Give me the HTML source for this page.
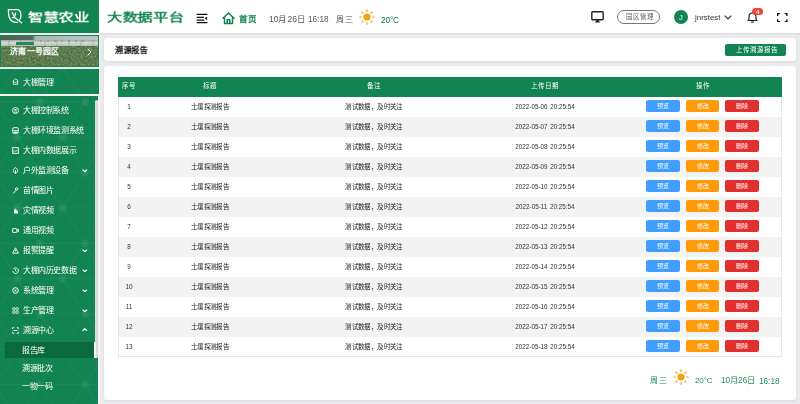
<!DOCTYPE html>
<html lang="zh-CN"><head><meta charset="utf-8">
<style>
*{margin:0;padding:0;box-sizing:border-box}
html,body{width:800px;height:404px;overflow:hidden;background:#ebebee;font-family:"Liberation Sans",sans-serif}
.abs{position:absolute}
.t{position:absolute;white-space:nowrap;line-height:1;will-change:transform}
.card{position:absolute;background:#fff;border-radius:3px;box-shadow:0 1px 3px rgba(0,0,0,.07)}
.btn{position:absolute;width:33.3px;height:12.3px;border-radius:2px}
</style></head><body>
<div class="abs" style="left:0;top:0;width:800px;height:32.5px;background:#fff"></div>
<div class="abs" style="left:99px;top:32.5px;width:701px;height:3px;background:linear-gradient(180deg,#d9d9dc,#e6e6e9 50%,#ebebee)"></div>
<div class="abs" style="left:0;top:0;width:99px;height:32.75px;background:#128451"></div>
<div class="abs" style="left:0;top:32.75px;width:99px;height:2.25px;background:#f1ecee"></div>
<svg class="abs" style="left:4px;top:6px" width="22" height="20" viewBox="0 0 22 20"><g fill="none" stroke="#fff" stroke-width="1.25" stroke-linecap="round" stroke-linejoin="round"><path d="M4.4 3.6 H13.8 Q16.9 4.3 16.9 9.5 Q16.9 12.3 15.6 13.8"/><path d="M13.4 16.3 Q7.2 16.6 5.2 11.2 Q4.4 8.5 4.4 3.6"/><path d="M8.3 6.6 L10.3 10.8 M11.7 7 L10.5 10.8 M8.2 11.6 H11 M11.2 11.9 L17.6 16.8"/></g></svg>
<div class="t" style="left:28px;top:11.7px;font-size:15.5px;color:#fff;font-weight:700;letter-spacing:-0.4px;transform:scale(0.98,0.72);transform-origin:0 0">智慧农业</div>
<div class="t" style="left:107px;top:12.2px;font-size:15.5px;color:#128451;font-weight:700;letter-spacing:-0.3px;transform:scale(0.98,0.72);transform-origin:0 0">大数据平台</div>
<svg class="abs" style="left:196px;top:13px" width="12" height="11" viewBox="0 0 12 11"><path d="M1.1 1.36H11M1.1 4.3H7.6M1.1 7.2H7.6M1.1 9.6H11" stroke="#111" stroke-width="1.2" stroke-linecap="round"/><path d="M9 5.3 L10.8 4 V6.8 Z" fill="#111" stroke="#111" stroke-width=".5" stroke-linejoin="round"/></svg>
<svg class="abs" style="left:222px;top:12px" width="13" height="12.5" viewBox="0 0 13 12.5"><path d="M1 6.2 L6.5 1 L12 6.2 M2.5 4.9 V11.5 H10.5 V4.9 M5.2 11.5 V7.8 H7.8 V11.5" stroke="#128451" stroke-width="1.5" fill="none" stroke-linejoin="round" stroke-linecap="round"/></svg>
<div class="t" style="left:238.5px;top:15.3px;font-size:8.5px;color:#128451;font-weight:700;letter-spacing:0px;">首页</div>
<div class="t" style="left:268.5px;top:15.2px;font-size:8.5px;color:#555;font-weight:400;letter-spacing:0px;">10月26日</div>
<div class="t" style="left:307.8px;top:15.9px;font-size:8.2px;color:#555;font-weight:400;letter-spacing:0px;">16:18</div>
<div class="t" style="left:336px;top:16px;font-size:8px;color:#555;font-weight:400;letter-spacing:0.5px;">周三</div>
<svg class="abs" style="left:358.5px;top:8.7px" width="16" height="16" viewBox="0 0 16 16"><circle cx="8" cy="8" r="3.6" fill="#eea512"/><g stroke="#eea512" stroke-width="1.2" stroke-linecap="round"><path d="M8 .8v1.6M8 13.6v1.6M.8 8h1.6M13.6 8h1.6M2.9 2.9l1.1 1.1M12 12l1.1 1.1M2.9 13.1l1.1-1.1M12 4l1.1-1.1"/></g></svg>
<div class="t" style="left:380.6px;top:15.8px;font-size:8.4px;color:#0f7a49;font-weight:400;letter-spacing:-0.2px;">20°C</div>
<svg class="abs" style="left:591px;top:11px" width="13" height="12" viewBox="0 0 13 12"><rect x="0.8" y="0.8" width="11.4" height="8" rx="1" fill="none" stroke="#222" stroke-width="1.4"/><path d="M4 11.5h5L7.5 9h-2z" fill="#222"/></svg>
<div class="abs" style="left:617.3px;top:10px;width:43px;height:14px;border:1px solid #777;border-radius:7px"></div>
<div class="t" style="left:625.5px;top:13.6px;font-size:6.5px;color:#666;font-weight:400;letter-spacing:0px;">园区管理</div>
<div class="abs" style="left:673.6px;top:9.8px;width:14.6px;height:14.6px;border-radius:50%;background:#128451"></div>
<div class="t" style="left:679.2px;top:13.6px;font-size:7.5px;color:#fff;font-weight:400;letter-spacing:0px;">J</div>
<div class="t" style="left:694.5px;top:13.5px;font-size:7.9px;color:#333;font-weight:400;letter-spacing:0px;">jnrstest</div>
<svg class="abs" style="left:724px;top:14.5px" width="8" height="5" viewBox="0 0 8 5"><path d="M.7 .7 L4 4 L7.3 .7" stroke="#333" stroke-width="1.2" fill="none"/></svg>
<svg class="abs" style="left:746.5px;top:12px" width="11" height="11" viewBox="0 0 11 11"><path d="M1 8.5 H10 L9 7 V4.5 A3.5 3.5 0 0 0 2 4.5 V7 Z" fill="none" stroke="#222" stroke-width="1.2" stroke-linejoin="round"/><path d="M4 10 H7" stroke="#222" stroke-width="1.1"/></svg>
<div class="abs" style="left:752px;top:8px;width:11px;height:7px;border-radius:3.5px;background:#f0443a"></div>
<div class="t" style="left:755.8px;top:8.8px;font-size:6px;color:#fff;font-weight:700;letter-spacing:0px;">4</div>
<svg class="abs" style="left:777px;top:12.8px" width="10.6" height="9.2" viewBox="0 0 10.6 9.2"><path d="M.65 2.9V.65H2.9M7.7 .65h2.25V2.9M9.95 6.3v2.25H7.7M2.9 8.55H.65V6.3" stroke="#111" stroke-width="1.3" fill="none"/></svg>
<div class="abs" style="left:98.3px;top:32.75px;width:1.7px;height:372px;background:#f4f4f4"></div>
<div class="abs" style="left:0;top:35px;width:99px;height:32px;background:#128451"></div>
<div class="abs" style="left:1px;top:36px;width:97px;height:30px;overflow:hidden;background:#5e7a50">
  <div class="abs" style="left:0;top:0;width:97px;height:5px;background:linear-gradient(90deg,#4c604c 0,#56695a 32%,#aab9b6 36%,#b9c6c4 100%)"></div>
  <div class="abs" style="left:0;top:4px;width:97px;height:6.5px;background:linear-gradient(180deg,#9aa99f,#cfd9d2 35%,#c3cec6 70%,#94a595)"></div>
  <svg class="abs" style="left:0;top:4px" width="97" height="8"><g stroke="#7d8c82" stroke-width=".5"><path d="M8 0V7M20 0V7M32 0V7M44 0V7M56 0V7M68 0V7M80 0V7M92 0V7"/></g><g fill="#3d4a40"><circle cx="40" cy="1" r=".6"/><circle cx="47" cy="1" r=".6"/><circle cx="54" cy="1" r=".6"/><circle cx="61" cy="1" r=".6"/><circle cx="68" cy="1" r=".6"/><circle cx="75" cy="1" r=".6"/><circle cx="82" cy="1" r=".6"/></g></svg>
  <div class="abs" style="left:15px;top:5.8px;width:17.5px;height:3.2px;background:#27865a"></div>
  <svg class="abs" style="left:0;top:10.3px" width="97" height="20"><filter id="nz" x="0" y="0" width="100%" height="100%" color-interpolation-filters="sRGB"><feTurbulence type="fractalNoise" baseFrequency="0.5" numOctaves="2" seed="5"/><feColorMatrix values="0.32 0 0 0 0.21  0.36 0 0 0 0.31  0.26 0 0 0 0.18  0 0 0 0 1"/></filter><rect width="97" height="20" filter="url(#nz)"/></svg>
</div>
<div class="t" style="left:10.3px;top:48.4px;font-size:8px;color:#fff;font-weight:700;letter-spacing:0.3px;">济南一号园区</div>
<svg class="abs" style="left:86.5px;top:47.8px" width="5" height="8" viewBox="0 0 5 8"><path d="M.8 .7 L4 4 L.8 7.3" stroke="#fff" stroke-width="1" fill="none"/></svg>
<div class="abs" style="left:0;top:67px;width:99px;height:2px;background:#f1ecee"></div>
<div class="abs" style="left:0;top:69px;width:99px;height:25px;background:#128451"></div>
<div class="abs" style="left:0;top:94px;width:99px;height:2px;background:#f4f4f4"></div>
<svg class="abs" style="left:11.6px;top:78.3px" width="7" height="7" viewBox="0 0 7 7"><path d="M.7 3.2 L3.5 .7 L6.3 3.2 M1.4 2.7 V6.3 H5.6 V2.7 M2.3 4.2 H4.7" stroke="#fff" stroke-width=".8" fill="none"/></svg>
<div class="t" style="left:23.3px;top:79.2px;font-size:8px;color:#fff;font-weight:500;letter-spacing:-0.4px;">大棚管理</div>
<div class="abs" style="left:0;top:96px;width:98.3px;height:310px;background:#128451"></div>
<svg class="abs" style="left:0;top:0" width="98.3" height="404" viewBox="0 0 98.3 404"><defs><clipPath id="sc"><rect x="0" y="69" width="98.3" height="25"/><rect x="0" y="96" width="98.3" height="308"/></clipPath></defs><g clip-path="url(#sc)"><path d="M0 31.20H98.3 M0 66.55H98.3 M0 101.90H98.3 M0 137.25H98.3 M0 172.60H98.3 M0 207.95H98.3 M0 243.30H98.3 M0 278.65H98.3 M0 314.00H98.3 M0 349.35H98.3 M0 384.70H98.3 M0 420.05H98.3 M-520.94 69L-307.72 404 M-479.06 69L-692.28 404 M-475.94 69L-262.72 404 M-434.06 69L-647.28 404 M-430.94 69L-217.72 404 M-389.06 69L-602.28 404 M-385.94 69L-172.72 404 M-344.06 69L-557.28 404 M-340.94 69L-127.72 404 M-299.06 69L-512.28 404 M-295.94 69L-82.72 404 M-254.06 69L-467.28 404 M-250.94 69L-37.72 404 M-209.06 69L-422.28 404 M-205.94 69L7.28 404 M-164.06 69L-377.28 404 M-160.94 69L52.28 404 M-119.06 69L-332.28 404 M-115.94 69L97.28 404 M-74.06 69L-287.28 404 M-70.94 69L142.28 404 M-29.06 69L-242.28 404 M-25.94 69L187.28 404 M15.94 69L-197.28 404 M19.06 69L232.28 404 M60.94 69L-152.28 404 M64.06 69L277.28 404 M105.94 69L-107.28 404 M109.06 69L322.28 404 M150.94 69L-62.28 404 M154.06 69L367.28 404 M195.94 69L-17.28 404 M199.06 69L412.28 404 M240.94 69L27.72 404 M244.06 69L457.28 404 M285.94 69L72.72 404 M289.06 69L502.28 404 M330.94 69L117.72 404 M334.06 69L547.28 404 M375.94 69L162.72 404 M379.06 69L592.28 404 M420.94 69L207.72 404 M424.06 69L637.28 404 M465.94 69L252.72 404 M469.06 69L682.28 404 M510.94 69L297.72 404 M514.06 69L727.28 404 M555.94 69L342.72 404" fill="none" stroke="rgba(255,255,255,0.07)" stroke-width="0.8"/><g fill="rgba(255,255,255,0.05)"><circle cx="17.50" cy="66.55" r="4"/><circle cx="62.50" cy="66.55" r="4"/><circle cx="40.00" cy="101.90" r="4"/><circle cx="85.00" cy="101.90" r="4"/><circle cx="17.50" cy="137.25" r="4"/><circle cx="62.50" cy="137.25" r="4"/><circle cx="40.00" cy="172.60" r="4"/><circle cx="85.00" cy="172.60" r="4"/><circle cx="17.50" cy="207.95" r="4"/><circle cx="62.50" cy="207.95" r="4"/><circle cx="40.00" cy="243.30" r="4"/><circle cx="85.00" cy="243.30" r="4"/><circle cx="17.50" cy="278.65" r="4"/><circle cx="62.50" cy="278.65" r="4"/><circle cx="40.00" cy="314.00" r="4"/><circle cx="85.00" cy="314.00" r="4"/><circle cx="17.50" cy="349.35" r="4"/><circle cx="62.50" cy="349.35" r="4"/><circle cx="40.00" cy="384.70" r="4"/><circle cx="85.00" cy="384.70" r="4"/></g></g></svg>
<div class="abs" style="left:94.6px;top:100px;width:3.1px;height:257.5px;border-radius:1.5px;background:#dcdcdc"></div>
<svg class="abs" style="left:11.6px;top:106.90px" width="7" height="7" viewBox="0 0 7 7"><circle cx="3.5" cy="3.5" r="3" fill="none" stroke="#fff" stroke-width=".9"/><path d="M1.9 3.6 A1.6 1.6 0 0 1 5.1 3.6 Z" fill="#fff"/><path d="M1.9 5.1 H5.1" stroke="#fff" stroke-width=".8"/></svg>
<div class="t" style="left:23px;top:107.35px;font-size:8px;color:#fff;font-weight:500;letter-spacing:-0.4px;">大棚控制系统</div>
<svg class="abs" style="left:11.6px;top:126.90px" width="7" height="7" viewBox="0 0 7 7"><rect x=".6" y=".6" width="5.8" height="5.8" rx="1.6" fill="none" stroke="#fff" stroke-width=".9"/><path d="M1 3.4 H6" stroke="#fff" stroke-width=".8"/><path d="M1.6 4.6 H5.4 V6 H1.6Z" fill="#fff"/></svg>
<div class="t" style="left:23px;top:127.35px;font-size:8px;color:#fff;font-weight:500;letter-spacing:-0.4px;">大棚环境监测系统</div>
<svg class="abs" style="left:11.6px;top:146.90px" width="7" height="7" viewBox="0 0 7 7"><rect x=".7" y=".7" width="5.6" height="5.6" fill="none" stroke="#fff" stroke-width=".9"/><path d="M1.4 5 L2.6 3.6 L3.6 4.5 L5.6 3.2" stroke="#fff" stroke-width=".8" fill="none"/></svg>
<div class="t" style="left:23px;top:147.35px;font-size:8px;color:#fff;font-weight:500;letter-spacing:-0.4px;">大棚内数据展示</div>
<svg class="abs" style="left:11.6px;top:166.90px" width="7" height="7" viewBox="0 0 7 7"><path d="M3.5 .6 C6.2 2 6.4 5 3.5 6.4 C.6 5 .8 2 3.5 .6Z M3.5 3 V6.4" fill="none" stroke="#fff" stroke-width=".9"/></svg>
<div class="t" style="left:23px;top:167.35px;font-size:8px;color:#fff;font-weight:500;letter-spacing:-0.4px;">户外监测设备</div>
<svg class="abs" style="left:82.2px;top:169.00px" width="5.6" height="3.4" viewBox="0 0 5.6 3.4"><path d="M.6 .6 L2.8 2.7 L5 .6" stroke="#fff" stroke-width="1.2" fill="none"/></svg>
<svg class="abs" style="left:11.6px;top:186.90px" width="7" height="7" viewBox="0 0 7 7"><path d="M4.6 .7 C6.3 .7 6.3 3.1 4.6 3.3 C3 3.3 3 .7 4.6 .7Z M4 3.3 L1.3 6.4" fill="none" stroke="#fff" stroke-width="1"/></svg>
<div class="t" style="left:23px;top:187.35px;font-size:8px;color:#fff;font-weight:500;letter-spacing:-0.4px;">苗情图片</div>
<svg class="abs" style="left:11.6px;top:206.90px" width="7" height="7" viewBox="0 0 7 7"><path d="M1 6.4 H6 V3.6 L4.9 4.3 V2.6 L3.6 3.6 V.9 L2.1 2.8 V6.4Z" fill="#fff"/></svg>
<div class="t" style="left:23px;top:207.35px;font-size:8px;color:#fff;font-weight:500;letter-spacing:-0.4px;">灾情视频</div>
<svg class="abs" style="left:11.6px;top:226.90px" width="7" height="7" viewBox="0 0 7 7"><rect x=".6" y="1.6" width="4.3" height="3.8" rx=".4" fill="none" stroke="#fff" stroke-width=".9"/><path d="M4.9 3.2 L6.5 2.2 V4.8 L4.9 3.8" fill="none" stroke="#fff" stroke-width=".8"/></svg>
<div class="t" style="left:23px;top:227.35px;font-size:8px;color:#fff;font-weight:500;letter-spacing:-0.4px;">通用视频</div>
<svg class="abs" style="left:11.6px;top:246.90px" width="7" height="7" viewBox="0 0 7 7"><path d="M3.5 .8 L6.4 6.2 H.6 Z M3.5 2.8 V4.4" fill="none" stroke="#fff" stroke-width=".9" stroke-linejoin="round"/></svg>
<div class="t" style="left:23px;top:247.35px;font-size:8px;color:#fff;font-weight:500;letter-spacing:-0.4px;">报警提醒</div>
<svg class="abs" style="left:82.2px;top:249.00px" width="5.6" height="3.4" viewBox="0 0 5.6 3.4"><path d="M.6 .6 L2.8 2.7 L5 .6" stroke="#fff" stroke-width="1.2" fill="none"/></svg>
<svg class="abs" style="left:11.6px;top:266.90px" width="7" height="7" viewBox="0 0 7 7"><path d="M1.2 2.2 A2.8 2.8 0 1 1 .8 4" fill="none" stroke="#fff" stroke-width=".9"/><path d="M3.5 2 V3.7 L4.6 4.4" fill="none" stroke="#fff" stroke-width=".8"/></svg>
<div class="t" style="left:23px;top:267.35px;font-size:8px;color:#fff;font-weight:500;letter-spacing:-0.4px;">大棚内历史数据</div>
<svg class="abs" style="left:82.2px;top:269.00px" width="5.6" height="3.4" viewBox="0 0 5.6 3.4"><path d="M.6 .6 L2.8 2.7 L5 .6" stroke="#fff" stroke-width="1.2" fill="none"/></svg>
<svg class="abs" style="left:11.6px;top:286.90px" width="7" height="7" viewBox="0 0 7 7"><circle cx="3.5" cy="3.5" r="2.8" fill="none" stroke="#fff" stroke-width="1"/><circle cx="3.5" cy="3.5" r="1.1" fill="#fff"/></svg>
<div class="t" style="left:23px;top:287.35px;font-size:8px;color:#fff;font-weight:500;letter-spacing:-0.4px;">系统管理</div>
<svg class="abs" style="left:82.2px;top:289.00px" width="5.6" height="3.4" viewBox="0 0 5.6 3.4"><path d="M.6 .6 L2.8 2.7 L5 .6" stroke="#fff" stroke-width="1.2" fill="none"/></svg>
<svg class="abs" style="left:11.6px;top:306.90px" width="7" height="7" viewBox="0 0 7 7"><rect x="0.7" y="0.7" width="2.3" height="2.3" rx=".5" fill="none" stroke="#fff" stroke-width=".8"/><rect x="0.7" y="4" width="2.3" height="2.3" rx=".5" fill="none" stroke="#fff" stroke-width=".8"/><rect x="4" y="0.7" width="2.3" height="2.3" rx=".5" fill="none" stroke="#fff" stroke-width=".8"/><rect x="4" y="4" width="2.3" height="2.3" rx=".5" fill="none" stroke="#fff" stroke-width=".8"/></svg>
<div class="t" style="left:23px;top:307.35px;font-size:8px;color:#fff;font-weight:500;letter-spacing:-0.4px;">生产管理</div>
<svg class="abs" style="left:82.2px;top:309.00px" width="5.6" height="3.4" viewBox="0 0 5.6 3.4"><path d="M.6 .6 L2.8 2.7 L5 .6" stroke="#fff" stroke-width="1.2" fill="none"/></svg>
<svg class="abs" style="left:11.6px;top:326.90px" width="7" height="7" viewBox="0 0 7 7"><path d="M.7 2.2V.7H2.2M4.8 .7H6.3V2.2M6.3 4.8V6.3H4.8M2.2 6.3H.7V4.8M1.6 3.5H5.4" fill="none" stroke="#fff" stroke-width=".9"/></svg>
<div class="t" style="left:23px;top:327.35px;font-size:8px;color:#fff;font-weight:500;letter-spacing:-0.4px;">溯源中心</div>
<svg class="abs" style="left:82.2px;top:328.40px" width="5.6" height="3.4" viewBox="0 0 5.6 3.4"><path d="M.6 2.8 L2.8 .7 L5 2.8" stroke="#fff" stroke-width="1.2" fill="none"/></svg>
<div class="abs" style="left:4.6px;top:341.7px;width:89.8px;height:16.3px;background:#0b6a3d"></div>
<div class="abs" style="left:94.4px;top:341.7px;width:1.4px;height:16px;background:#fafafa"></div>
<div class="t" style="left:21.9px;top:347.05px;font-size:8px;color:#fff;font-weight:500;letter-spacing:-0.4px;">报告库</div>
<div class="t" style="left:21.9px;top:365.15px;font-size:8px;color:#fff;font-weight:500;letter-spacing:-0.4px;">溯源批次</div>
<div class="t" style="left:21.9px;top:383.25px;font-size:8px;color:#fff;font-weight:500;letter-spacing:-0.4px;">一物一码</div>
<div class="card" style="left:104px;top:38px;width:691.5px;height:23.3px"></div>
<div class="t" style="left:114.8px;top:46.4px;font-size:8.5px;color:#111;font-weight:700;letter-spacing:-0.3px;transform:scaleX(0.95);transform-origin:0 0">溯源报告</div>
<div class="abs" style="left:725.4px;top:43.75px;width:61px;height:12.3px;border-radius:2px;background:#128451"></div>
<div class="t" style="left:736px;top:46.6px;font-size:6.5px;color:#fff;font-weight:400;letter-spacing:0px;">上传溯源报告</div>
<div class="card" style="left:104px;top:65.5px;width:691.5px;height:334px"></div>
<div class="abs" style="left:117.5px;top:76.5px;width:664.5px;height:20px;background:#128451"></div>
<div class="abs" style="left:117.5px;top:96.5px;width:664.5px;height:260.3px;border:1px solid #e8e8e8;border-top:0"></div>
<div class="t" style="left:69px;width:120px;text-align:center;top:83px;font-size:6.5px;color:#fff;font-weight:400;letter-spacing:0px">序号</div>
<div class="t" style="left:150px;width:120px;text-align:center;top:83px;font-size:6.5px;color:#fff;font-weight:400;letter-spacing:0px">标题</div>
<div class="t" style="left:314px;width:120px;text-align:center;top:83px;font-size:6.5px;color:#fff;font-weight:400;letter-spacing:0px">备注</div>
<div class="t" style="left:485.4px;width:120px;text-align:center;top:83px;font-size:6.5px;color:#fff;font-weight:400;letter-spacing:0px">上传日期</div>
<div class="t" style="left:642.5px;width:120px;text-align:center;top:83px;font-size:6.5px;color:#fff;font-weight:400;letter-spacing:0px">操作</div>
<div class="t" style="left:69px;width:120px;text-align:center;top:103.7px;font-size:6.3px;color:#333;font-weight:400;letter-spacing:0px">1</div>
<div class="t" style="left:150px;width:120px;text-align:center;top:104.2px;font-size:6.5px;color:#222;font-weight:500;letter-spacing:-0.58px">土壤探测报告</div>
<div class="t" style="left:314px;width:120px;text-align:center;top:104.2px;font-size:6.5px;color:#222;font-weight:500;letter-spacing:-0.58px">测试数据，及时关注</div>
<div class="t" style="left:485.4px;width:120px;text-align:center;top:103.7px;font-size:6.3px;color:#333;font-weight:400;letter-spacing:0px">2022-05-06<span style="margin-left:2.6px">20:25:54</span></div>
<div class="btn" style="left:646.25px;top:99.60px;background:#409eff"></div>
<div class="t" style="left:602.9px;width:120px;text-align:center;top:102.8px;font-size:6px;color:#fff;font-weight:400;letter-spacing:0px">预览</div>
<div class="btn" style="left:686px;top:99.60px;background:#ff9a0a"></div>
<div class="t" style="left:642.65px;width:120px;text-align:center;top:102.8px;font-size:6px;color:#fff;font-weight:400;letter-spacing:0px">修改</div>
<div class="btn" style="left:725.4px;top:99.60px;background:#e2302f"></div>
<div class="t" style="left:682.05px;width:120px;text-align:center;top:102.8px;font-size:6px;color:#fff;font-weight:400;letter-spacing:0px">删除</div>
<div class="abs" style="left:118.5px;top:116.5px;width:662.5px;height:20px;background:#f3f3f3"></div>
<div class="t" style="left:69px;width:120px;text-align:center;top:123.7px;font-size:6.3px;color:#333;font-weight:400;letter-spacing:0px">2</div>
<div class="t" style="left:150px;width:120px;text-align:center;top:124.2px;font-size:6.5px;color:#222;font-weight:500;letter-spacing:-0.58px">土壤探测报告</div>
<div class="t" style="left:314px;width:120px;text-align:center;top:124.2px;font-size:6.5px;color:#222;font-weight:500;letter-spacing:-0.58px">测试数据，及时关注</div>
<div class="t" style="left:485.4px;width:120px;text-align:center;top:123.7px;font-size:6.3px;color:#333;font-weight:400;letter-spacing:0px">2022-05-07<span style="margin-left:2.6px">20:25:54</span></div>
<div class="btn" style="left:646.25px;top:119.60px;background:#409eff"></div>
<div class="t" style="left:602.9px;width:120px;text-align:center;top:122.8px;font-size:6px;color:#fff;font-weight:400;letter-spacing:0px">预览</div>
<div class="btn" style="left:686px;top:119.60px;background:#ff9a0a"></div>
<div class="t" style="left:642.65px;width:120px;text-align:center;top:122.8px;font-size:6px;color:#fff;font-weight:400;letter-spacing:0px">修改</div>
<div class="btn" style="left:725.4px;top:119.60px;background:#e2302f"></div>
<div class="t" style="left:682.05px;width:120px;text-align:center;top:122.8px;font-size:6px;color:#fff;font-weight:400;letter-spacing:0px">删除</div>
<div class="t" style="left:69px;width:120px;text-align:center;top:143.7px;font-size:6.3px;color:#333;font-weight:400;letter-spacing:0px">3</div>
<div class="t" style="left:150px;width:120px;text-align:center;top:144.2px;font-size:6.5px;color:#222;font-weight:500;letter-spacing:-0.58px">土壤探测报告</div>
<div class="t" style="left:314px;width:120px;text-align:center;top:144.2px;font-size:6.5px;color:#222;font-weight:500;letter-spacing:-0.58px">测试数据，及时关注</div>
<div class="t" style="left:485.4px;width:120px;text-align:center;top:143.7px;font-size:6.3px;color:#333;font-weight:400;letter-spacing:0px">2022-05-08<span style="margin-left:2.6px">20:25:54</span></div>
<div class="btn" style="left:646.25px;top:139.60px;background:#409eff"></div>
<div class="t" style="left:602.9px;width:120px;text-align:center;top:142.79999999999998px;font-size:6px;color:#fff;font-weight:400;letter-spacing:0px">预览</div>
<div class="btn" style="left:686px;top:139.60px;background:#ff9a0a"></div>
<div class="t" style="left:642.65px;width:120px;text-align:center;top:142.79999999999998px;font-size:6px;color:#fff;font-weight:400;letter-spacing:0px">修改</div>
<div class="btn" style="left:725.4px;top:139.60px;background:#e2302f"></div>
<div class="t" style="left:682.05px;width:120px;text-align:center;top:142.79999999999998px;font-size:6px;color:#fff;font-weight:400;letter-spacing:0px">删除</div>
<div class="abs" style="left:118.5px;top:156.5px;width:662.5px;height:20px;background:#f3f3f3"></div>
<div class="t" style="left:69px;width:120px;text-align:center;top:163.7px;font-size:6.3px;color:#333;font-weight:400;letter-spacing:0px">4</div>
<div class="t" style="left:150px;width:120px;text-align:center;top:164.2px;font-size:6.5px;color:#222;font-weight:500;letter-spacing:-0.58px">土壤探测报告</div>
<div class="t" style="left:314px;width:120px;text-align:center;top:164.2px;font-size:6.5px;color:#222;font-weight:500;letter-spacing:-0.58px">测试数据，及时关注</div>
<div class="t" style="left:485.4px;width:120px;text-align:center;top:163.7px;font-size:6.3px;color:#333;font-weight:400;letter-spacing:0px">2022-05-09<span style="margin-left:2.6px">20:25:54</span></div>
<div class="btn" style="left:646.25px;top:159.60px;background:#409eff"></div>
<div class="t" style="left:602.9px;width:120px;text-align:center;top:162.79999999999998px;font-size:6px;color:#fff;font-weight:400;letter-spacing:0px">预览</div>
<div class="btn" style="left:686px;top:159.60px;background:#ff9a0a"></div>
<div class="t" style="left:642.65px;width:120px;text-align:center;top:162.79999999999998px;font-size:6px;color:#fff;font-weight:400;letter-spacing:0px">修改</div>
<div class="btn" style="left:725.4px;top:159.60px;background:#e2302f"></div>
<div class="t" style="left:682.05px;width:120px;text-align:center;top:162.79999999999998px;font-size:6px;color:#fff;font-weight:400;letter-spacing:0px">删除</div>
<div class="t" style="left:69px;width:120px;text-align:center;top:183.7px;font-size:6.3px;color:#333;font-weight:400;letter-spacing:0px">5</div>
<div class="t" style="left:150px;width:120px;text-align:center;top:184.2px;font-size:6.5px;color:#222;font-weight:500;letter-spacing:-0.58px">土壤探测报告</div>
<div class="t" style="left:314px;width:120px;text-align:center;top:184.2px;font-size:6.5px;color:#222;font-weight:500;letter-spacing:-0.58px">测试数据，及时关注</div>
<div class="t" style="left:485.4px;width:120px;text-align:center;top:183.7px;font-size:6.3px;color:#333;font-weight:400;letter-spacing:0px">2022-05-10<span style="margin-left:2.6px">20:25:54</span></div>
<div class="btn" style="left:646.25px;top:179.60px;background:#409eff"></div>
<div class="t" style="left:602.9px;width:120px;text-align:center;top:182.79999999999998px;font-size:6px;color:#fff;font-weight:400;letter-spacing:0px">预览</div>
<div class="btn" style="left:686px;top:179.60px;background:#ff9a0a"></div>
<div class="t" style="left:642.65px;width:120px;text-align:center;top:182.79999999999998px;font-size:6px;color:#fff;font-weight:400;letter-spacing:0px">修改</div>
<div class="btn" style="left:725.4px;top:179.60px;background:#e2302f"></div>
<div class="t" style="left:682.05px;width:120px;text-align:center;top:182.79999999999998px;font-size:6px;color:#fff;font-weight:400;letter-spacing:0px">删除</div>
<div class="abs" style="left:118.5px;top:196.5px;width:662.5px;height:20px;background:#f3f3f3"></div>
<div class="t" style="left:69px;width:120px;text-align:center;top:203.7px;font-size:6.3px;color:#333;font-weight:400;letter-spacing:0px">6</div>
<div class="t" style="left:150px;width:120px;text-align:center;top:204.2px;font-size:6.5px;color:#222;font-weight:500;letter-spacing:-0.58px">土壤探测报告</div>
<div class="t" style="left:314px;width:120px;text-align:center;top:204.2px;font-size:6.5px;color:#222;font-weight:500;letter-spacing:-0.58px">测试数据，及时关注</div>
<div class="t" style="left:485.4px;width:120px;text-align:center;top:203.7px;font-size:6.3px;color:#333;font-weight:400;letter-spacing:0px">2022-05-11<span style="margin-left:2.6px">20:25:54</span></div>
<div class="btn" style="left:646.25px;top:199.60px;background:#409eff"></div>
<div class="t" style="left:602.9px;width:120px;text-align:center;top:202.79999999999998px;font-size:6px;color:#fff;font-weight:400;letter-spacing:0px">预览</div>
<div class="btn" style="left:686px;top:199.60px;background:#ff9a0a"></div>
<div class="t" style="left:642.65px;width:120px;text-align:center;top:202.79999999999998px;font-size:6px;color:#fff;font-weight:400;letter-spacing:0px">修改</div>
<div class="btn" style="left:725.4px;top:199.60px;background:#e2302f"></div>
<div class="t" style="left:682.05px;width:120px;text-align:center;top:202.79999999999998px;font-size:6px;color:#fff;font-weight:400;letter-spacing:0px">删除</div>
<div class="t" style="left:69px;width:120px;text-align:center;top:223.7px;font-size:6.3px;color:#333;font-weight:400;letter-spacing:0px">7</div>
<div class="t" style="left:150px;width:120px;text-align:center;top:224.2px;font-size:6.5px;color:#222;font-weight:500;letter-spacing:-0.58px">土壤探测报告</div>
<div class="t" style="left:314px;width:120px;text-align:center;top:224.2px;font-size:6.5px;color:#222;font-weight:500;letter-spacing:-0.58px">测试数据，及时关注</div>
<div class="t" style="left:485.4px;width:120px;text-align:center;top:223.7px;font-size:6.3px;color:#333;font-weight:400;letter-spacing:0px">2022-05-12<span style="margin-left:2.6px">20:25:54</span></div>
<div class="btn" style="left:646.25px;top:219.60px;background:#409eff"></div>
<div class="t" style="left:602.9px;width:120px;text-align:center;top:222.79999999999998px;font-size:6px;color:#fff;font-weight:400;letter-spacing:0px">预览</div>
<div class="btn" style="left:686px;top:219.60px;background:#ff9a0a"></div>
<div class="t" style="left:642.65px;width:120px;text-align:center;top:222.79999999999998px;font-size:6px;color:#fff;font-weight:400;letter-spacing:0px">修改</div>
<div class="btn" style="left:725.4px;top:219.60px;background:#e2302f"></div>
<div class="t" style="left:682.05px;width:120px;text-align:center;top:222.79999999999998px;font-size:6px;color:#fff;font-weight:400;letter-spacing:0px">删除</div>
<div class="abs" style="left:118.5px;top:236.5px;width:662.5px;height:20px;background:#f3f3f3"></div>
<div class="t" style="left:69px;width:120px;text-align:center;top:243.7px;font-size:6.3px;color:#333;font-weight:400;letter-spacing:0px">8</div>
<div class="t" style="left:150px;width:120px;text-align:center;top:244.2px;font-size:6.5px;color:#222;font-weight:500;letter-spacing:-0.58px">土壤探测报告</div>
<div class="t" style="left:314px;width:120px;text-align:center;top:244.2px;font-size:6.5px;color:#222;font-weight:500;letter-spacing:-0.58px">测试数据，及时关注</div>
<div class="t" style="left:485.4px;width:120px;text-align:center;top:243.7px;font-size:6.3px;color:#333;font-weight:400;letter-spacing:0px">2022-05-13<span style="margin-left:2.6px">20:25:54</span></div>
<div class="btn" style="left:646.25px;top:239.60px;background:#409eff"></div>
<div class="t" style="left:602.9px;width:120px;text-align:center;top:242.79999999999998px;font-size:6px;color:#fff;font-weight:400;letter-spacing:0px">预览</div>
<div class="btn" style="left:686px;top:239.60px;background:#ff9a0a"></div>
<div class="t" style="left:642.65px;width:120px;text-align:center;top:242.79999999999998px;font-size:6px;color:#fff;font-weight:400;letter-spacing:0px">修改</div>
<div class="btn" style="left:725.4px;top:239.60px;background:#e2302f"></div>
<div class="t" style="left:682.05px;width:120px;text-align:center;top:242.79999999999998px;font-size:6px;color:#fff;font-weight:400;letter-spacing:0px">删除</div>
<div class="t" style="left:69px;width:120px;text-align:center;top:263.7px;font-size:6.3px;color:#333;font-weight:400;letter-spacing:0px">9</div>
<div class="t" style="left:150px;width:120px;text-align:center;top:264.2px;font-size:6.5px;color:#222;font-weight:500;letter-spacing:-0.58px">土壤探测报告</div>
<div class="t" style="left:314px;width:120px;text-align:center;top:264.2px;font-size:6.5px;color:#222;font-weight:500;letter-spacing:-0.58px">测试数据，及时关注</div>
<div class="t" style="left:485.4px;width:120px;text-align:center;top:263.7px;font-size:6.3px;color:#333;font-weight:400;letter-spacing:0px">2022-05-14<span style="margin-left:2.6px">20:25:54</span></div>
<div class="btn" style="left:646.25px;top:259.60px;background:#409eff"></div>
<div class="t" style="left:602.9px;width:120px;text-align:center;top:262.8px;font-size:6px;color:#fff;font-weight:400;letter-spacing:0px">预览</div>
<div class="btn" style="left:686px;top:259.60px;background:#ff9a0a"></div>
<div class="t" style="left:642.65px;width:120px;text-align:center;top:262.8px;font-size:6px;color:#fff;font-weight:400;letter-spacing:0px">修改</div>
<div class="btn" style="left:725.4px;top:259.60px;background:#e2302f"></div>
<div class="t" style="left:682.05px;width:120px;text-align:center;top:262.8px;font-size:6px;color:#fff;font-weight:400;letter-spacing:0px">删除</div>
<div class="abs" style="left:118.5px;top:276.5px;width:662.5px;height:20px;background:#f3f3f3"></div>
<div class="t" style="left:69px;width:120px;text-align:center;top:283.7px;font-size:6.3px;color:#333;font-weight:400;letter-spacing:0px">10</div>
<div class="t" style="left:150px;width:120px;text-align:center;top:284.2px;font-size:6.5px;color:#222;font-weight:500;letter-spacing:-0.58px">土壤探测报告</div>
<div class="t" style="left:314px;width:120px;text-align:center;top:284.2px;font-size:6.5px;color:#222;font-weight:500;letter-spacing:-0.58px">测试数据，及时关注</div>
<div class="t" style="left:485.4px;width:120px;text-align:center;top:283.7px;font-size:6.3px;color:#333;font-weight:400;letter-spacing:0px">2022-05-15<span style="margin-left:2.6px">20:25:54</span></div>
<div class="btn" style="left:646.25px;top:279.60px;background:#409eff"></div>
<div class="t" style="left:602.9px;width:120px;text-align:center;top:282.8px;font-size:6px;color:#fff;font-weight:400;letter-spacing:0px">预览</div>
<div class="btn" style="left:686px;top:279.60px;background:#ff9a0a"></div>
<div class="t" style="left:642.65px;width:120px;text-align:center;top:282.8px;font-size:6px;color:#fff;font-weight:400;letter-spacing:0px">修改</div>
<div class="btn" style="left:725.4px;top:279.60px;background:#e2302f"></div>
<div class="t" style="left:682.05px;width:120px;text-align:center;top:282.8px;font-size:6px;color:#fff;font-weight:400;letter-spacing:0px">删除</div>
<div class="t" style="left:69px;width:120px;text-align:center;top:303.7px;font-size:6.3px;color:#333;font-weight:400;letter-spacing:0px">11</div>
<div class="t" style="left:150px;width:120px;text-align:center;top:304.2px;font-size:6.5px;color:#222;font-weight:500;letter-spacing:-0.58px">土壤探测报告</div>
<div class="t" style="left:314px;width:120px;text-align:center;top:304.2px;font-size:6.5px;color:#222;font-weight:500;letter-spacing:-0.58px">测试数据，及时关注</div>
<div class="t" style="left:485.4px;width:120px;text-align:center;top:303.7px;font-size:6.3px;color:#333;font-weight:400;letter-spacing:0px">2022-05-16<span style="margin-left:2.6px">20:25:54</span></div>
<div class="btn" style="left:646.25px;top:299.60px;background:#409eff"></div>
<div class="t" style="left:602.9px;width:120px;text-align:center;top:302.8px;font-size:6px;color:#fff;font-weight:400;letter-spacing:0px">预览</div>
<div class="btn" style="left:686px;top:299.60px;background:#ff9a0a"></div>
<div class="t" style="left:642.65px;width:120px;text-align:center;top:302.8px;font-size:6px;color:#fff;font-weight:400;letter-spacing:0px">修改</div>
<div class="btn" style="left:725.4px;top:299.60px;background:#e2302f"></div>
<div class="t" style="left:682.05px;width:120px;text-align:center;top:302.8px;font-size:6px;color:#fff;font-weight:400;letter-spacing:0px">删除</div>
<div class="abs" style="left:118.5px;top:316.5px;width:662.5px;height:20px;background:#f3f3f3"></div>
<div class="t" style="left:69px;width:120px;text-align:center;top:323.7px;font-size:6.3px;color:#333;font-weight:400;letter-spacing:0px">12</div>
<div class="t" style="left:150px;width:120px;text-align:center;top:324.2px;font-size:6.5px;color:#222;font-weight:500;letter-spacing:-0.58px">土壤探测报告</div>
<div class="t" style="left:314px;width:120px;text-align:center;top:324.2px;font-size:6.5px;color:#222;font-weight:500;letter-spacing:-0.58px">测试数据，及时关注</div>
<div class="t" style="left:485.4px;width:120px;text-align:center;top:323.7px;font-size:6.3px;color:#333;font-weight:400;letter-spacing:0px">2022-05-17<span style="margin-left:2.6px">20:25:54</span></div>
<div class="btn" style="left:646.25px;top:319.60px;background:#409eff"></div>
<div class="t" style="left:602.9px;width:120px;text-align:center;top:322.8px;font-size:6px;color:#fff;font-weight:400;letter-spacing:0px">预览</div>
<div class="btn" style="left:686px;top:319.60px;background:#ff9a0a"></div>
<div class="t" style="left:642.65px;width:120px;text-align:center;top:322.8px;font-size:6px;color:#fff;font-weight:400;letter-spacing:0px">修改</div>
<div class="btn" style="left:725.4px;top:319.60px;background:#e2302f"></div>
<div class="t" style="left:682.05px;width:120px;text-align:center;top:322.8px;font-size:6px;color:#fff;font-weight:400;letter-spacing:0px">删除</div>
<div class="t" style="left:69px;width:120px;text-align:center;top:343.7px;font-size:6.3px;color:#333;font-weight:400;letter-spacing:0px">13</div>
<div class="t" style="left:150px;width:120px;text-align:center;top:344.2px;font-size:6.5px;color:#222;font-weight:500;letter-spacing:-0.58px">土壤探测报告</div>
<div class="t" style="left:314px;width:120px;text-align:center;top:344.2px;font-size:6.5px;color:#222;font-weight:500;letter-spacing:-0.58px">测试数据，及时关注</div>
<div class="t" style="left:485.4px;width:120px;text-align:center;top:343.7px;font-size:6.3px;color:#333;font-weight:400;letter-spacing:0px">2022-05-18<span style="margin-left:2.6px">20:25:54</span></div>
<div class="btn" style="left:646.25px;top:339.60px;background:#409eff"></div>
<div class="t" style="left:602.9px;width:120px;text-align:center;top:342.8px;font-size:6px;color:#fff;font-weight:400;letter-spacing:0px">预览</div>
<div class="btn" style="left:686px;top:339.60px;background:#ff9a0a"></div>
<div class="t" style="left:642.65px;width:120px;text-align:center;top:342.8px;font-size:6px;color:#fff;font-weight:400;letter-spacing:0px">修改</div>
<div class="btn" style="left:725.4px;top:339.60px;background:#e2302f"></div>
<div class="t" style="left:682.05px;width:120px;text-align:center;top:342.8px;font-size:6px;color:#fff;font-weight:400;letter-spacing:0px">删除</div>
<div class="t" style="left:650px;top:377px;font-size:8px;color:#1f8a58;font-weight:400;letter-spacing:0.5px;">周三</div>
<svg class="abs" style="left:673.3px;top:369px" width="16" height="16" viewBox="0 0 16 16"><circle cx="8" cy="8" r="3.6" fill="#eea512"/><g stroke="#eea512" stroke-width="1.2" stroke-linecap="round"><path d="M8 .8v1.6M8 13.6v1.6M.8 8h1.6M13.6 8h1.6M2.9 2.9l1.1 1.1M12 12l1.1 1.1M2.9 13.1l1.1-1.1M12 4l1.1-1.1"/></g></svg>
<div class="t" style="left:695px;top:377px;font-size:8px;color:#1f8a58;font-weight:400;letter-spacing:-0.1px;">20°C</div>
<div class="t" style="left:720.6px;top:376.8px;font-size:8.2px;color:#1f8a58;font-weight:400;letter-spacing:0px;">10月26日</div>
<div class="t" style="left:759.3px;top:377.5px;font-size:8.2px;color:#1f8a58;font-weight:400;letter-spacing:0px;">16:18</div>
</body></html>
